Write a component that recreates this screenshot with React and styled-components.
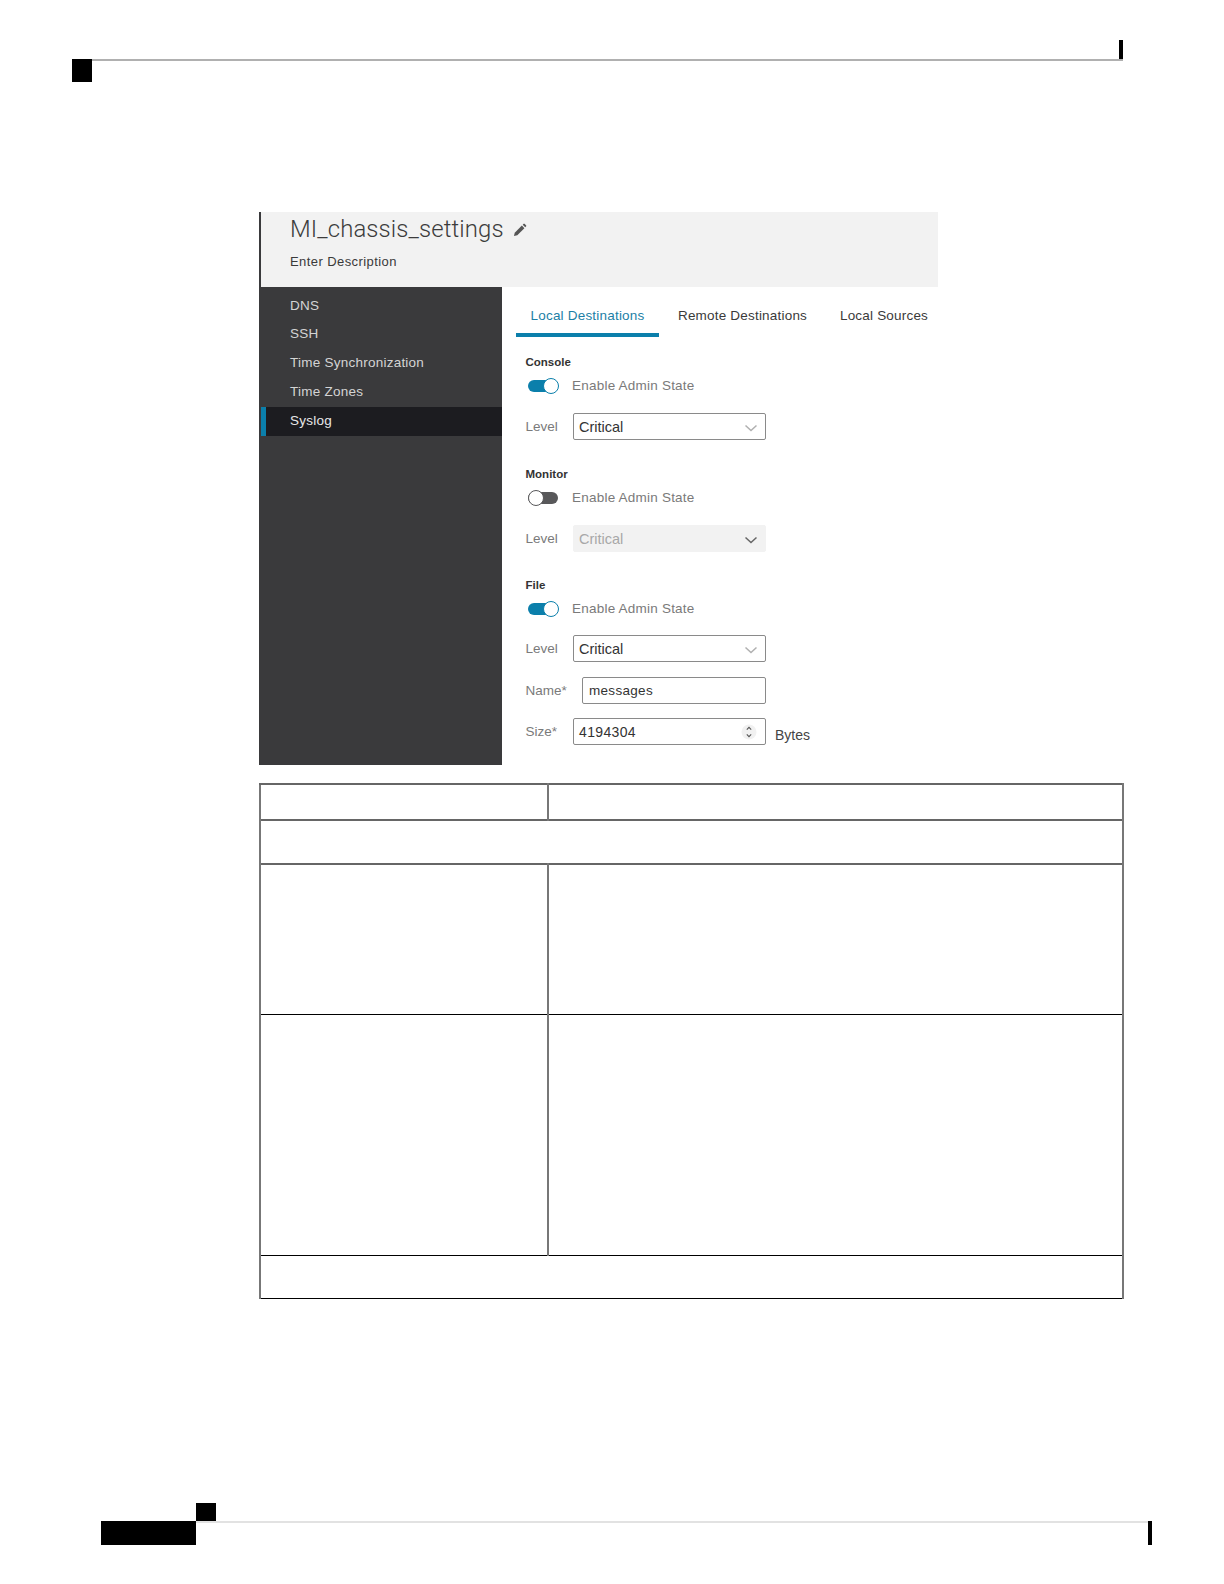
import React from "react";
import styled, { createGlobalStyle } from "styled-components";

const Global = createGlobalStyle`
  html, body { margin: 0; padding: 0; background: #fff; }
  body { font-family: "Liberation Sans", Arial, sans-serif; }
`;

const Page = styled.div`
  width: 1224px;
  height: 1584px;
  display: flex;
  flex-direction: column;
  overflow: hidden;
`;

const RunHead = styled.header`
  margin: 40px 101px 0 72px;
  display: flex;
  flex-direction: column;
`;
const TickRow = styled.div`
  display: flex;
  justify-content: flex-end;
  height: 19px;
`;
const Tick = styled.div`
  width: 4px;
  height: ${p => p.$h}px;
  background: #000;
`;
const RuleRow = styled.div`
  display: flex;
  height: 23px;
`;
const Block = styled.div`
  width: ${p => p.$w}px;
  height: ${p => p.$h}px;
  background: #000;
  flex: none;
`;
const Rule = styled.div`
  flex: 1;
  height: 2px;
  background: ${p => p.$c};
`;

const Shot = styled.section`
  margin: 130px 0 0 259px;
  width: 680px;
  height: 553px;
  display: grid;
  grid-template-columns: 243px 434px;
  grid-template-rows: 75px 478px;
  border-left: 2px solid #3a3a3c;
  box-sizing: border-box;
`;
const TitleBar = styled.div`
  grid-column: 1 / 3;
  background: #f2f2f2;
  padding-left: 29px;
  display: flex;
  flex-direction: column;
`;
const TitleLine = styled.div`
  display: flex;
  align-items: center;
  gap: 9px;
  height: 35px;
`;
const Title = styled.h1`
  margin: 0;
  font: 300 23.9px/35px Roboto, "Liberation Sans", sans-serif;
  color: #3c3c3c;
  letter-spacing: 0.12px;
`;
const Desc = styled.div`
  margin-top: 5px;
  font-size: 13px;
  line-height: 20px;
  letter-spacing: 0.42px;
  color: #3a3a3a;
`;
const Side = styled.nav`
  background: #3a3a3c;
  padding-top: 4.6px;
  width: 241px;
`;
const SideItem = styled.div`
  height: 28.8px;
  line-height: 28.8px;
  padding-left: ${p => (p.$active ? 24 : 29)}px;
  font-size: 13.5px;
  letter-spacing: 0.24px;
  color: ${p => (p.$active ? "#e8e8e8" : "#d4d4d4")};
  background: ${p => (p.$active ? "#1c1c20" : "transparent")};
  border-left: ${p => (p.$active ? "5px solid #0b7fab" : "none")};
`;
const Main = styled.div`
  background: #fff;
  padding-left: 14px;
  margin-left: -2px;
`;
const Tabs = styled.div`
  display: flex;
  height: 50px;
  margin-bottom: 18px;
`;
const Tab = styled.div`
  flex: none;
  width: ${p => p.$w}px;
  padding: 21px 0 0;
  box-sizing: border-box;
  text-align: center;
  font-size: 13.5px;
  line-height: 16px;
  letter-spacing: 0.2px;
  color: ${p => (p.$active ? "#1c7fa6" : "#3a3a3a")};
  border-bottom: ${p => (p.$active ? "4px solid #0b7fab" : "4px solid transparent")};
`;
const Form = styled.div`
  padding-left: 9.5px;
`;
const Group = styled.div`
  margin-bottom: ${p => p.$mb}px;
`;
const GroupLabel = styled.div`
  font-size: 11.5px;
  font-weight: 700;
  line-height: 14px;
  color: #333;
`;
const ToggleRow = styled.div`
  display: flex;
  align-items: center;
  margin: 8px 0 0 2.5px;
  height: 16px;
  gap: 14px;
`;
const Track = styled.div`
  position: relative;
  margin-top: 2px;
  width: 30px;
  height: 12px;
  border-radius: 6px;
  background: ${p => (p.$on ? "#0b7fab" : "#58585a")};
`;
const Knob = styled.div`
  position: absolute;
  top: -2px;
  ${p => (p.$on ? "right: -1px;" : "left: 0;")}
  width: 16px;
  height: 16px;
  border-radius: 50%;
  box-sizing: border-box;
  background: #fff;
  border: 1px solid ${p => (p.$on ? "#0b7fab" : "#58585a")};
`;
const ToggleText = styled.span`
  font-size: 13.5px;
  letter-spacing: 0.22px;
  color: #7a7a7a;
`;
const FieldRow = styled.div`
  display: flex;
  align-items: center;
  height: 27px;
  margin-top: ${p => p.$mt}px;
`;
const FieldLabel = styled.label`
  width: ${p => p.$w}px;
  flex: none;
  font-size: 13.5px;
  color: #7a7a7a;
`;
const Box = styled.div`
  width: ${p => p.$w}px;
  height: 27px;
  box-sizing: border-box;
  display: flex;
  align-items: center;
  justify-content: space-between;
  padding: 0 8px 0 ${p => p.$pl || 5}px;
  border-radius: 2px;
  border: 1px solid ${p => (p.$off ? "#f2f2f2" : "#8a8a8a")};
  background: ${p => (p.$off ? "#f2f2f2" : "#fff")};
  font-size: ${p => p.$fs || 14.5}px;
  letter-spacing: ${p => p.$ls || 0}px;
  color: ${p => (p.$off ? "#a8a8a8" : "#333")};
`;
const Unit = styled.span`
  margin: 6px 0 0 9px;
  font-size: 14px;
  color: #444;
`;

const Table = styled.table`
  margin: 18px 0 0 259px;
  width: 865px;
  border-collapse: collapse;
  table-layout: fixed;
`;
const Cell = styled.td`
  border-left: 2px solid #777;
  border-right: 2px solid #777;
  border-top: ${p => (p.$soft ? "2px solid #666" : "1px solid #000")};
  border-bottom: ${p => (p.$last ? "1px solid #000" : "none")};
  height: ${p => p.$h}px;
  padding: 0;
  box-sizing: border-box;
`;

const RunFoot = styled.footer`
  margin: 204px 0 0 101px;
  width: 1051px;
  display: flex;
  flex-direction: column;
`;
const FootTop = styled.div`
  display: flex;
  height: 19px;
  padding-left: 95px;
`;
const FootRule = styled.div`
  display: flex;
  align-items: flex-start;
  height: 23px;
  margin-top: -1px;
`;

const Pencil = () => (
  <svg width="14" height="14" viewBox="0 0 15 15">
    <path d="M1 14l.9-3.6 7.6-7.6 2.7 2.7-7.6 7.6L1 14z" fill="#555" />
    <path d="M10.4 1.9l1-1c.3-.3.7-.3 1 0l1.7 1.7c.3.3.3.7 0 1l-1 1z" fill="#555" />
  </svg>
);
const ChevronWrap = styled.span`
  display: flex;
  margin: 3px -1px 0 0;
`;
const Chevron = ({ c = "#b0b0b0" }) => (
  <ChevronWrap>
    <svg width="14" height="8" viewBox="0 0 14 8">
      <path d="M1.5 1.5L7 6.5l5.5-5" fill="none" stroke={c} strokeWidth="1.5" />
    </svg>
  </ChevronWrap>
);
const Spin = () => (
  <svg width="16" height="18" viewBox="0 0 16 18">
    <circle cx="8" cy="9" r="7.5" fill="#f1f1f1" />
    <path d="M5.8 6.6L8 4.4l2.2 2.2M5.8 11.4L8 13.6l2.2-2.2" fill="none" stroke="#555" strokeWidth="1.1" />
  </svg>
);

const Toggle = ({ on }) => (
  <ToggleRow>
    <Track $on={on}><Knob $on={on} /></Track>
    <ToggleText>Enable Admin State</ToggleText>
  </ToggleRow>
);

const nav = ["DNS", "SSH", "Time Synchronization", "Time Zones"];

export default function App() {
  return (
    <Page>
      <Global />
      <RunHead>
        <TickRow><Tick $h={20} /></TickRow>
        <RuleRow>
          <Block $w={20} $h={23} />
          <Rule $c="#b0b0b0" />
        </RuleRow>
      </RunHead>

      <Shot>
        <TitleBar>
          <TitleLine>
            <Title>MI_chassis_settings</Title>
            <Pencil />
          </TitleLine>
          <Desc>Enter Description</Desc>
        </TitleBar>
        <Side>
          {nav.map(n => <SideItem key={n}>{n}</SideItem>)}
          <SideItem $active>Syslog</SideItem>
        </Side>
        <Main>
          <Tabs>
            <Tab $active $w={143}>Local Destinations</Tab>
            <Tab $w={167}>Remote Destinations</Tab>
            <Tab $w={116}>Local Sources</Tab>
          </Tabs>
          <Form>
            <Group $mb={27}>
              <GroupLabel>Console</GroupLabel>
              <Toggle on />
              <FieldRow $mt={20}>
                <FieldLabel $w={47.5}>Level</FieldLabel>
                <Box $w={193}>Critical<Chevron /></Box>
              </FieldRow>
            </Group>
            <Group $mb={26}>
              <GroupLabel>Monitor</GroupLabel>
              <Toggle />
              <FieldRow $mt={20}>
                <FieldLabel $w={47.5}>Level</FieldLabel>
                <Box $w={193} $off>Critical<Chevron c="#666" /></Box>
              </FieldRow>
            </Group>
            <Group $mb={0}>
              <GroupLabel>File</GroupLabel>
              <Toggle on />
              <FieldRow $mt={19}>
                <FieldLabel $w={47.5}>Level</FieldLabel>
                <Box $w={193}>Critical<Chevron /></Box>
              </FieldRow>
              <FieldRow $mt={15}>
                <FieldLabel $w={56.5}>Name*</FieldLabel>
                <Box $w={184} $pl={6} $fs={13.5} $ls={0.3}>messages</Box>
              </FieldRow>
              <FieldRow $mt={14}>
                <FieldLabel $w={47.5}>Size*</FieldLabel>
                <Box $w={193} $fs={14} $ls={0.35}>4194304<Spin /></Box>
                <Unit>Bytes</Unit>
              </FieldRow>
            </Group>
          </Form>
        </Main>
      </Shot>

      <Table>
        <colgroup>
          <col style={{ width: 288 }} />
          <col />
        </colgroup>
        <tbody>
          <tr><Cell $soft $h={36} /><Cell $soft $h={36} /></tr>
          <tr><Cell $soft $h={44} colSpan={2} /></tr>
          <tr><Cell $soft $h={150} /><Cell $soft $h={150} /></tr>
          <tr><Cell $h={241} /><Cell $h={241} /></tr>
          <tr><Cell $last $h={43} colSpan={2} /></tr>
        </tbody>
      </Table>

      <RunFoot>
        <FootTop><Block $w={20} $h={19} /></FootTop>
        <FootRule>
          <Block $w={95} $h={24} />
          <Rule $c="#e2e2e2" />
          <Tick $h={24} />
        </FootRule>
      </RunFoot>
    </Page>
  );
}
